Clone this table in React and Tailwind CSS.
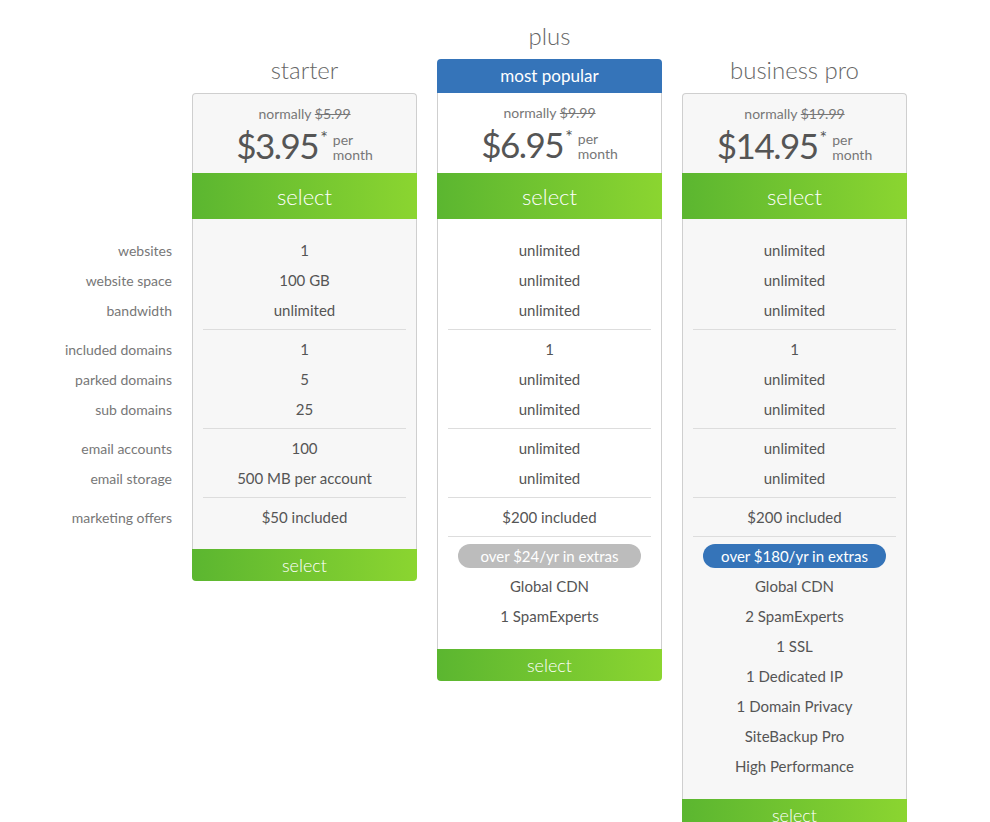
const FONT = { fontFamily: 'Lato, "Open Sans", sans-serif' };

const LABELS = [
  ['websites', 'website space', 'bandwidth'],
  ['included domains', 'parked domains', 'sub domains'],
  ['email accounts', 'email storage'],
  ['marketing offers'],
];

const PLANS = [
  {
    name: 'starter',
    was: '$5.99',
    price: '$3.95',
    groups: [
      ['1', '100 GB', 'unlimited'],
      ['1', '5', '25'],
      ['100', '500 MB per account'],
      ['$50 included'],
    ],
  },
  {
    name: 'plus',
    popular: true,
    was: '$9.99',
    price: '$6.95',
    groups: [
      ['unlimited', 'unlimited', 'unlimited'],
      ['1', 'unlimited', 'unlimited'],
      ['unlimited', 'unlimited'],
      ['$200 included'],
    ],
    pill: 'over $24/yr in extras',
    pillClass: 'bg-[#bcbcbc]',
    extras: ['Global CDN', '1 SpamExperts'],
  },
  {
    name: 'business pro',
    was: '$19.99',
    price: '$14.95',
    groups: [
      ['unlimited', 'unlimited', 'unlimited'],
      ['1', 'unlimited', 'unlimited'],
      ['unlimited', 'unlimited'],
      ['$200 included'],
    ],
    pill: 'over $180/yr in extras',
    pillClass: 'bg-[#3574b9]',
    extras: [
      'Global CDN',
      '2 SpamExperts',
      '1 SSL',
      '1 Dedicated IP',
      '1 Domain Privacy',
      'SiteBackup Pro',
      'High Performance',
    ],
  },
];

function SelectButton({ big }) {
  return (
    <button
      className={`w-full bg-linear-to-r from-[#5bb630] to-[#8bd530] text-white font-light ${
        big ? 'h-[46px] text-[22px]' : 'h-[32px] text-[18px] rounded-b-[4px]'
      }`}
    >
      select
    </button>
  );
}

function Card({ plan }) {
  const bg = plan.popular ? 'bg-white' : 'bg-[#f7f7f7]';
  return (
    <div className={`w-[225px] flex flex-col ${plan.popular ? '' : 'mt-[34px]'}`}>
      <div className="h-[46px] flex items-center justify-center text-[24px] font-light text-[#666]">
        {plan.name}
      </div>
      {plan.popular && (
        <div className="h-[34px] rounded-t-[4px] bg-[#3574b9] text-white text-[17px] flex items-center justify-center">
          most popular
        </div>
      )}
      <div
        className={`border-x border-[#cfcfcf] h-[80px] ${
          plan.popular ? '' : 'border-t rounded-t-[4px]'
        } ${bg}`}
      >
        <div className="flex flex-col items-center pt-[11px]">
          <div className="text-[14px] text-[#777] leading-[18px]">
            normally <span className="line-through">{plan.was}</span>
          </div>
          <div className="flex items-start text-[#555] mt-[1px]">
            <span className="text-[35px] leading-[42px] tracking-[-1.5px] pr-[2px]">{plan.price}</span>
            <span className="text-[18px] leading-[20px] mt-[3px]">*</span>
            <span className="text-[14px] leading-[15px] text-[#777] ml-[5px] mt-[8px]">
              per
              <br />
              month
            </span>
          </div>
        </div>
      </div>
      <SelectButton big />
      <div className={`border-x border-[#cfcfcf] ${bg} pt-[12px] ${plan.pill ? 'pb-[14px]' : 'pb-[13px]'}`}>
        {plan.groups.map((g, i) => (
          <div
            key={i}
            className={`py-1 mx-[10px] ${
              i < plan.groups.length - 1 || plan.pill ? 'border-b border-[#dddddd]' : ''
            }`}
          >
            {g.map((v, j) => (
              <div key={j} className="h-[30px] flex items-center justify-center text-[15px] text-[#555]">
                {v}
              </div>
            ))}
          </div>
        ))}
        {plan.pill && (
          <div className="py-1 mx-[10px]">
            <div className="h-[30px] flex items-center justify-center">
              <div
                className={`${plan.pillClass} w-[183px] h-[24px] rounded-full text-white text-[15px] flex items-center justify-center`}
              >
                {plan.pill}
              </div>
            </div>
            {plan.extras.map((v) => (
              <div key={v} className="h-[30px] flex items-center justify-center text-[15px] text-[#555]">
                {v}
              </div>
            ))}
          </div>
        )}
      </div>
      <SelectButton />
    </div>
  );
}

export default function App() {
  return (
    <div className="bg-white min-h-[822px] pt-[13px]" style={FONT}>
      <div className="flex items-start gap-5">
        <div className="w-[172px] pt-[206px]">
          <div className="pt-[12px]">
            {LABELS.map((g, i) => (
              <div key={i} className="py-1 border-b border-transparent">
                {g.map((l) => (
                  <div key={l} className="h-[30px] flex items-center justify-end text-[14px] text-[#777]">
                    {l}
                  </div>
                ))}
              </div>
            ))}
          </div>
        </div>
        {PLANS.map((p) => (
          <Card key={p.name} plan={p} />
        ))}
      </div>
    </div>
  );
}
